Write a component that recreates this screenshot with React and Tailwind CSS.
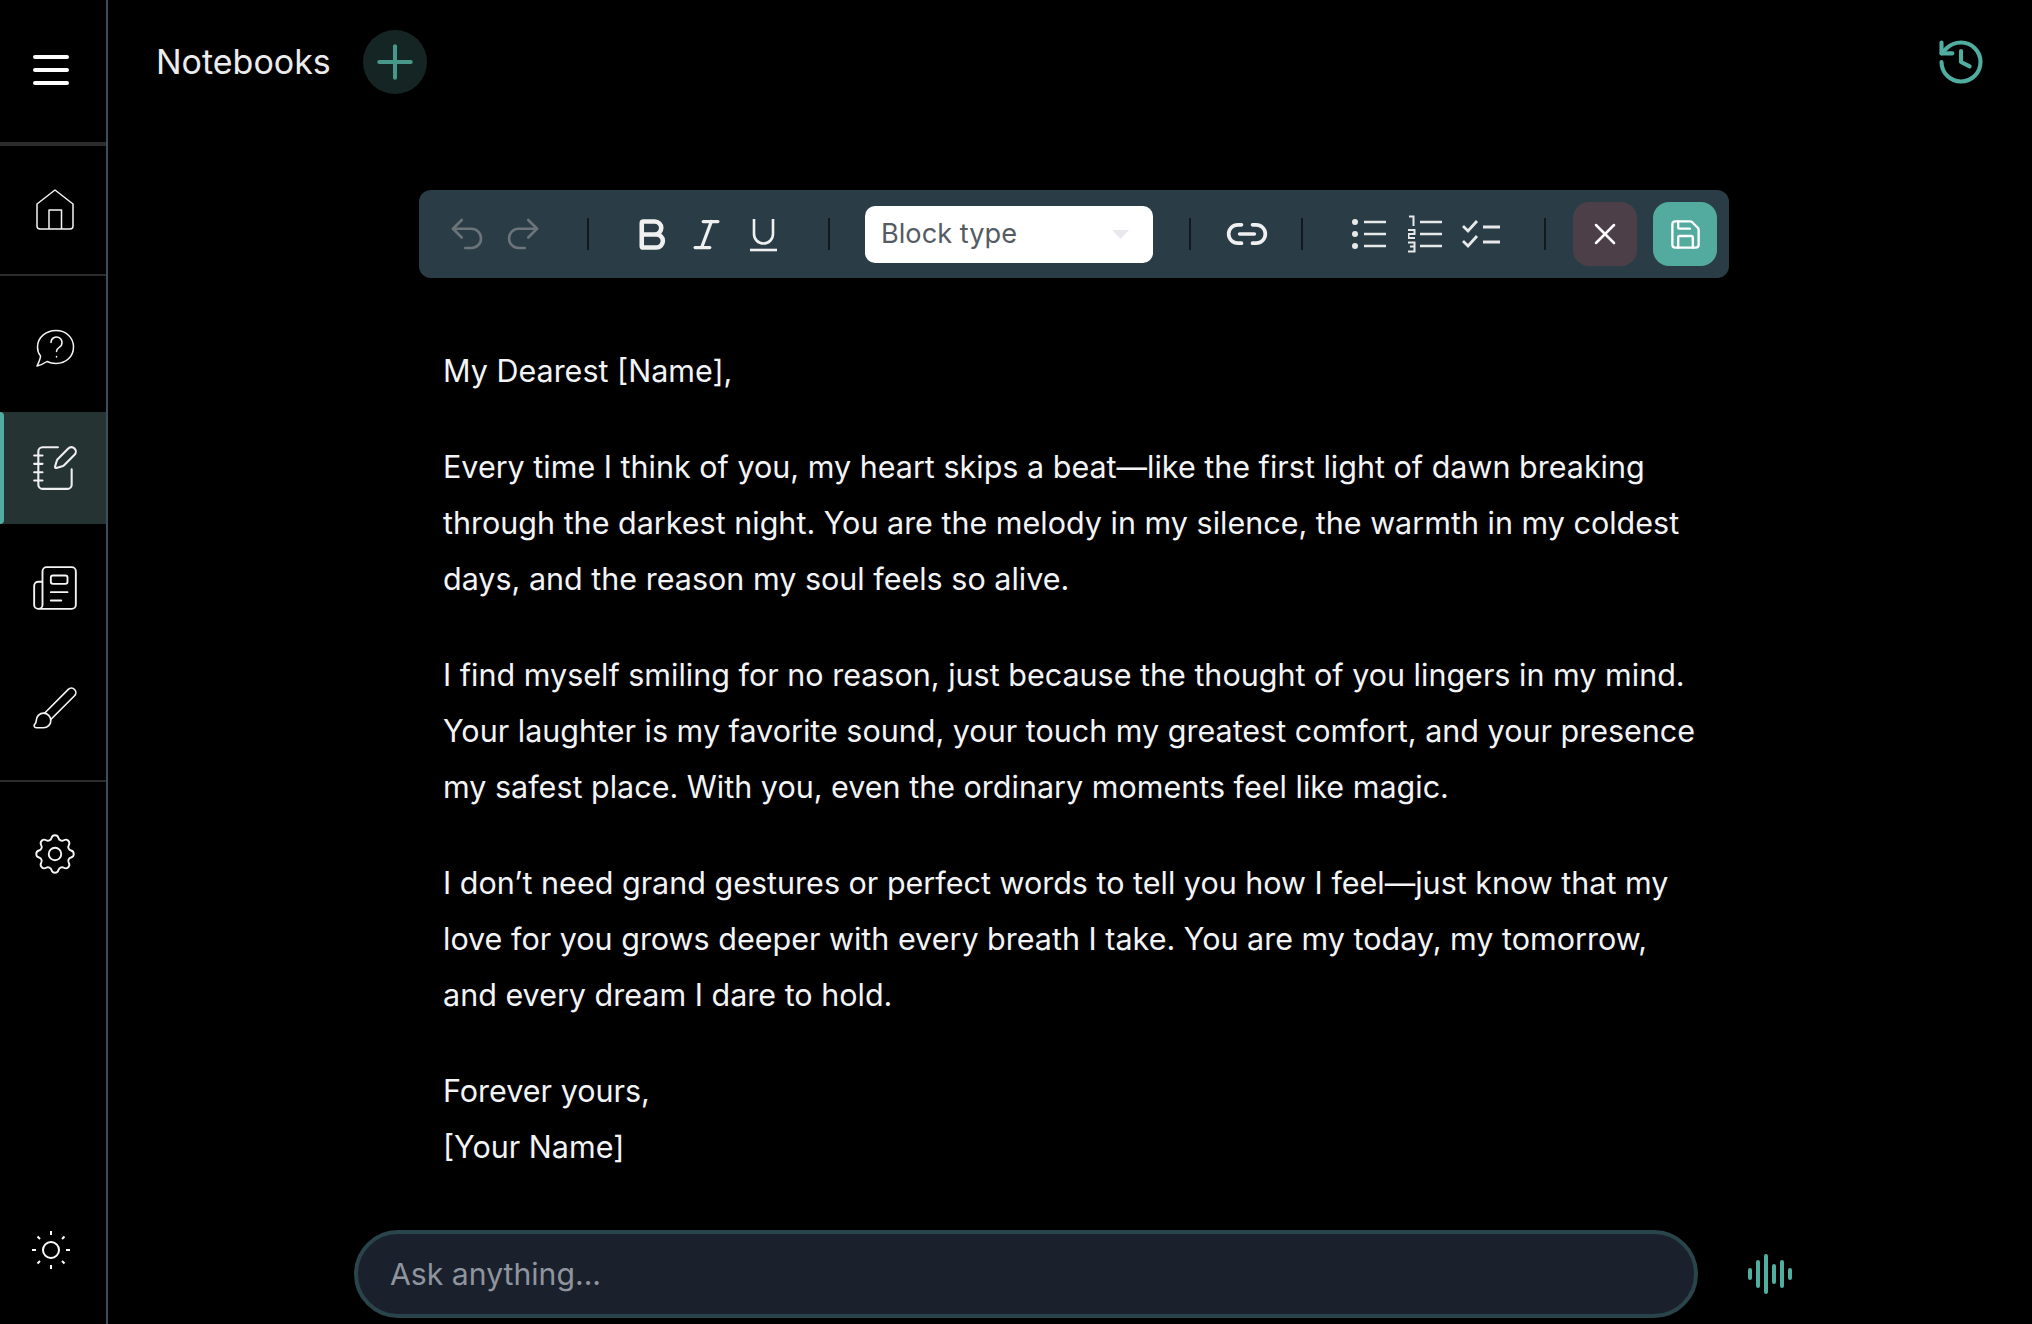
import { NotebookPen, Newspaper, Plus, History, Undo2, Redo2, Bold, Italic, Link2, X, Save } from "lucide-react";
import { TbSettings } from "react-icons/tb";

const font = { fontFamily: "Inter, sans-serif" };

const paragraphs = [
  ["My Dearest [Name],"],
  [
    "Every time I think of you, my heart skips a beat—like the first light of dawn breaking",
    "through the darkest night. You are the melody in my silence, the warmth in my coldest",
    "days, and the reason my soul feels so alive.",
  ],
  [
    "I find myself smiling for no reason, just because the thought of you lingers in my mind.",
    "Your laughter is my favorite sound, your touch my greatest comfort, and your presence",
    "my safest place. With you, even the ordinary moments feel like magic.",
  ],
  [
    "I don’t need grand gestures or perfect words to tell you how I feel—just know that my",
    "love for you grows deeper with every breath I take. You are my today, my tomorrow,",
    "and every dream I dare to hold.",
  ],
  ["Forever yours,", "[Your Name]"],
];

// ====== icons ======
function MenuIcon() {
  return (
    <svg width="36" height="30" viewBox="0 0 36 30" fill="none" stroke="white" strokeWidth="4" strokeLinecap="round">
      <path d="M2 2h32M2 15h32M2 28h32" />
    </svg>
  );
}

function HomeIcon() {
  return (
    <svg width="38" height="42" viewBox="0 0 38 42" fill="none" stroke="#f5f5f5" strokeWidth="1.5" strokeLinejoin="round">
      <path d="M1 15 19 1l18 14v22a3 3 0 0 1-3 3H4a3 3 0 0 1-3-3z" />
      <path d="M13 40V21h12.5v19" />
    </svg>
  );
}

function ChatIcon() {
  return (
    <svg width="40" height="38" viewBox="0 0 40 38" fill="none" stroke="#f5f5f5" strokeWidth="1.5" strokeLinecap="round" strokeLinejoin="round">
      <path d="M2 37C4 33 5.5 30 5.5 27 3 24 2.5 21 2.5 18 2.5 8.5 11 1.5 21 1.5S38.500 8.500 38.500 18 31 34.500 21 34.500C17 34.500 14 33.500 12 32.500 9 34.500 6 36 2 37Z" />
      <path d="M16 13.500a5.500 5.500 0 1 1 8.500 4.600c-1.800 1.200-3 2.300-3 4.400" />
      <path d="M21.500 27.500v.5" />
    </svg>
  );
}

function BrushIcon() {
  return (
    <svg width="50" height="50" viewBox="0 0 24 24" fill="none" stroke="#f5f5f5" strokeWidth="0.8" strokeLinecap="round" strokeLinejoin="round">
      <path d="M9.969 17.031 21.378 5.624a1 1 0 0 0-3.002-3.002L6.967 14.031" />
      <path d="M6.500 21A3.500 3.500 0 1 0 3 17.500a2.620 2.620 0 0 1-.708 1.792A1 1 0 0 0 3 21z" />
    </svg>
  );
}

function SunIcon() {
  return (
    <svg width="40" height="40" viewBox="0 0 40 40" fill="none" stroke="white" strokeWidth="2" strokeLinecap="butt">
      <circle cx="20" cy="20" r="8" />
      <path d="M20 1v4M20 35v4M1 20h4M35 20h4M6.500 6.500l2.500 2.500M31 31l2.500 2.500M6.500 33.500 9 31M31 9l2.500-2.500" />
    </svg>
  );
}

function UnderlineIcon() {
  return (
    <svg width="27" height="36" viewBox="0 0 27 36" fill="none" stroke="#f0f0f0" strokeWidth="2.6">
      <path d="M4 2v15a9.500 9.500 0 0 0 19 0V2" />
      <path d="M0 33h27" />
    </svg>
  );
}

function CaretIcon() {
  return (
    <svg width="17" height="9" viewBox="0 0 17 9" fill="#e8e8ee">
      <path d="M0 0h17L8.500 9z" />
    </svg>
  );
}

function ListIcon() {
  return (
    <svg width="34" height="32" viewBox="0 0 34 32" fill="none" stroke="#e8e8e8" strokeWidth="2.4">
      <circle cx="3" cy="4" r="3" fill="#e8e8e8" stroke="none" />
      <circle cx="3" cy="16" r="3" fill="#e8e8e8" stroke="none" />
      <circle cx="3" cy="28" r="3" fill="#e8e8e8" stroke="none" />
      <path d="M12 4h22M12 16h22M12 28h22" />
    </svg>
  );
}

function OrderedIcon() {
  return (
    <svg width="34" height="38" viewBox="0 0 34 38" fill="none" stroke="#e8e8e8" strokeWidth="2">
      <path d="M1 1.500h4.500V11" />
      <path d="M0 15h6.500v4H.5v4h6.500" />
      <path d="M0 27.500h6.500v4H2M6.500 31.500v5H0" />
      <path d="M12 7h22M12 19h22M12 31h22" strokeWidth="2.400" />
    </svg>
  );
}

function CheckListIcon() {
  return (
    <svg width="38" height="28" viewBox="0 0 38 28" fill="none" stroke="#e8e8e8" strokeWidth="2.800">
      <path d="M1 6l5 5L15 1" />
      <path d="M1 21l5 5 9-10" />
      <path d="M21 7h17M21 22h17" />
    </svg>
  );
}

function Wave() {
  return (
    <svg width="46" height="42" viewBox="0 0 46 42" fill="none" stroke="#4fae9f" strokeWidth="4" strokeLinecap="round">
      <path d="M3 17v8M11 9v24M19 3v36M27 13v16M35 9v24M43 17v8" />
    </svg>
  );
}

function Sep() {
  return <div className="h-8 w-[2px] shrink-0 bg-[#14181c]" />;
}

export default function App() {
  return (
    <div className="flex h-[1324px] w-[2032px] overflow-hidden bg-black text-white" style={font}>
      {/* sidebar */}
      <aside className="flex w-[108px] shrink-0 flex-col border-r-2 border-[#3e4d5c]">
        <div className="flex h-[146px] items-center justify-center border-b-4 border-[#2b2b2b] pb-[2px] pr-1">
          <MenuIcon />
        </div>
        <div className="flex h-[130px] items-center justify-center border-b-2 border-[#2b2b2b] pl-1">
          <HomeIcon />
        </div>
        <div className="flex h-[136px] items-center justify-center pl-1 pt-2">
          <ChatIcon />
        </div>
        <div className="flex h-[112px] items-stretch bg-[#263333]">
          <div className="w-1 rounded-r bg-[#4fae9f]" />
          <div className="flex flex-1 items-center justify-center">
            <NotebookPen size={50} strokeWidth={1} color="#f0f0f0" />
          </div>
        </div>
        <div className="flex h-[128px] items-center justify-center pl-1">
          <Newspaper size={50} strokeWidth={0.9} color="#f5f5f5" />
        </div>
        <div className="flex h-[128px] items-center justify-center pb-[14px] pl-1">
          <BrushIcon />
        </div>
        <div className="flex h-[146px] items-center justify-center border-t-2 border-[#2b2b2b] pl-1">
          <TbSettings size={50} strokeWidth={0.9} color="#f5f5f5" />
        </div>
        <div className="mt-auto flex h-[146px] items-center justify-center pb-[2px] pr-1">
          <SunIcon />
        </div>
      </aside>

      {/* main */}
      <main className="flex min-w-0 flex-1 flex-col">
        <header className="flex h-[124px] shrink-0 items-center pl-[48px] pr-[45px]">
          <h1 className="w-[207px] text-[34px] font-normal leading-none text-[#ececec]">Notebooks</h1>
          <button className="flex h-16 w-16 items-center justify-center rounded-full bg-[#152523]">
            <Plus size={54} strokeWidth={1.8} className="text-[#47988a]" />
          </button>
          <History size={52} strokeWidth={1.9} className="ml-auto text-[#4fae9f]" />
        </header>

        {/* toolbar */}
        <div className="ml-[311px] mt-[66px] flex h-[88px] w-[1310px] shrink-0 items-center rounded-xl bg-[#2a3d47] pl-[27px]">
          <div className="flex items-center gap-[14px] text-[#6d7479]">
            <Undo2 size={42} strokeWidth={1.5} />
            <Redo2 size={42} strokeWidth={1.5} />
          </div>
          <div className="ml-[43px]"><Sep /></div>
          <Bold size={39} strokeWidth={2.8} color="#f0f0f0" className="ml-[43px]" />
          <Italic size={39} strokeWidth={2} color="#f0f0f0" className="ml-4" />
          <div className="ml-6 pt-[2px]"><UnderlineIcon /></div>
          <div className="ml-[51px]"><Sep /></div>
          <div className="ml-[35px] flex h-[57px] w-[288px] shrink-0 items-center justify-between rounded-[10px] bg-white pl-4 pr-6 pt-[1px] text-[27.200px] text-[#555c63]">
            Block type
            <CaretIcon />
          </div>
          <div className="ml-9"><Sep /></div>
          <Link2 size={44} strokeWidth={2} color="#f0f0f0" className="ml-[34px]" />
          <div className="ml-[32px]"><Sep /></div>
          <div className="ml-[49px]"><ListIcon /></div>
          <div className="ml-[22px]"><OrderedIcon /></div>
          <div className="ml-5"><CheckListIcon /></div>
          <div className="ml-11"><Sep /></div>
          <button className="ml-[27px] flex h-16 w-16 items-center justify-center rounded-2xl bg-[#4d3f48]">
            <X size={36} strokeWidth={1.7} />
          </button>
          <button className="ml-4 flex h-16 w-16 items-center justify-center rounded-2xl bg-[#52ab9e]">
            <Save size={35} strokeWidth={1.6} />
          </button>
        </div>

        <article className="ml-[335px] mt-[65px] flex flex-col gap-10 text-[30.500px] leading-[56px] text-gray-100">
          {paragraphs.map((lines, i) => (
            <p key={i} className="whitespace-nowrap">
              {lines.map((l) => (
                <span key={l} className="block">{l}</span>
              ))}
            </p>
          ))}
        </article>

        <div className="mb-[6px] ml-[246px] mt-auto flex items-center">
          <div className="flex h-[88px] w-[1344px] items-center rounded-full border-4 border-[#2a444b] bg-[#1a212c] px-8 pt-[2px] text-[30.200px] text-[#8f949e]">
            Ask anything...
          </div>
          <div className="ml-[49px]"><Wave /></div>
        </div>
      </main>
    </div>
  );
}
